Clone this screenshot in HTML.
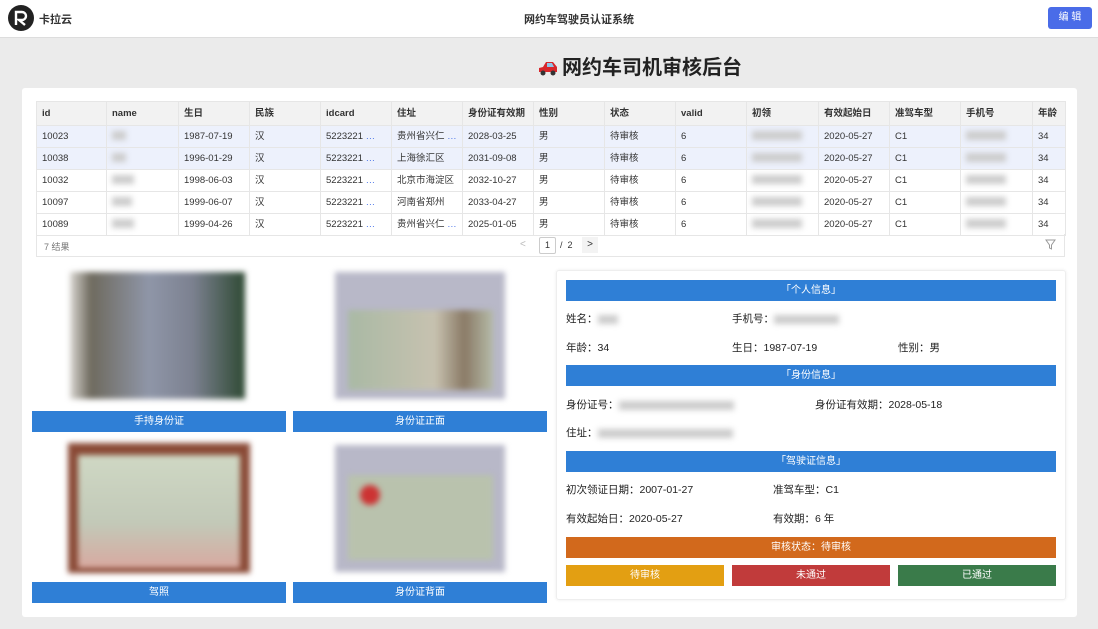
<!DOCTYPE html><html><head><meta charset="utf-8"><style>
*{box-sizing:border-box;margin:0;padding:0}
body{width:1098px;height:629px;background:#ebebeb;font-family:"Liberation Sans","Noto Sans CJK SC",sans-serif;color:#333;position:relative;overflow:hidden;font-size:10px}
.hdr{position:absolute;left:0;top:0;width:1098px;height:38px;background:#fff;border-bottom:1px solid #ddd}
.abs{position:absolute}
.card{position:absolute;left:22px;top:88px;width:1055px;height:529px;background:#fff;border-radius:3px}
table{border-collapse:collapse;position:absolute;left:36px;top:101px;width:1029px;table-layout:fixed}
td,th{height:22px;line-height:12px;border:1px solid #e6e6e6;text-align:left;vertical-align:middle;padding:0 0 0 5px;font-size:9.5px;font-weight:normal;white-space:nowrap;overflow:hidden;color:#333}
th{background:#f2f2f2;font-weight:bold;height:24px}
tr.sel td{background:#edf1fc}
.bl{display:inline-block;width:30px;height:9px;background:#ccc;filter:blur(3px);vertical-align:middle}
.dots{color:#4a74e8}
.btn{position:absolute;background:#2f7fd6;color:#fff;font-size:10px;text-align:center;line-height:21px;height:21px}
.img{position:absolute;filter:blur(3px)}
.lbl{position:absolute;font-size:10.5px;color:#222;line-height:14px}
</style></head><body>
<div class="hdr">
<svg class="abs" style="left:8px;top:5px" width="26" height="26" viewBox="0 0 26 26"><circle cx="13" cy="13" r="13" fill="#222"/><path d="M8 20V7h6a4 4 0 0 1 0 8h-3l6 5" stroke="#fff" stroke-width="2.4" fill="none"/></svg>
<div class="abs" style="left:39px;top:11px;font-size:11px;font-weight:bold">卡拉云</div>
<div class="abs" style="left:524px;top:11px;font-size:11px;font-weight:bold">网约车驾驶员认证系统</div>
<div class="abs" style="left:1048px;top:7px;width:44px;height:22px;background:#4a6ce8;border-radius:3px;color:#fff;font-size:10px;text-align:center;line-height:22px">编 辑</div>
</div>
<svg class="abs" style="left:537px;top:60px" width="22" height="16" viewBox="0 0 22 16"><path d="M2 12V8l4-1 3-5h7l4 5v5z" fill="#d8262b"/><path d="M10 3h5l2 4h-7z" fill="#8fc4e6"/><circle cx="6" cy="13" r="2.5" fill="#333"/><circle cx="16" cy="13" r="2.5" fill="#333"/></svg>
<div class="abs" style="left:562px;top:56px;font-size:20px;line-height:24px;font-weight:bold;color:#222">网约车司机审核后台</div>
<div class="card"></div>
<table>
<colgroup><col style="width:70px"><col style="width:72px"><col style="width:71px"><col style="width:71px"><col style="width:71px"><col style="width:71px"><col style="width:71px"><col style="width:71px"><col style="width:71px"><col style="width:71px"><col style="width:72px"><col style="width:71px"><col style="width:71px"><col style="width:72px"><col style="width:33px"></colgroup>
<tr><th>id</th><th>name</th><th>生日</th><th>民族</th><th>idcard</th><th>住址</th><th>身份证有效期</th><th>性别</th><th>状态</th><th>valid</th><th>初领</th><th>有效起始日</th><th>准驾车型</th><th>手机号</th><th>年龄</th></tr>
<tr class="sel"><td>10023</td><td><span class="bl" style="width:14px"></span></td><td>1987-07-19</td><td>汉</td><td>5223221<span class="dots"> …</span></td><td>贵州省兴仁 <span class="dots">…</span></td><td>2028-03-25</td><td>男</td><td>待审核</td><td>6</td><td><span class="bl" style="width:50px"></span></td><td>2020-05-27</td><td>C1</td><td><span class="bl" style="width:40px"></span></td><td>34</td></tr>
<tr class="sel"><td>10038</td><td><span class="bl" style="width:14px"></span></td><td>1996-01-29</td><td>汉</td><td>5223221<span class="dots"> …</span></td><td>上海徐汇区</td><td>2031-09-08</td><td>男</td><td>待审核</td><td>6</td><td><span class="bl" style="width:50px"></span></td><td>2020-05-27</td><td>C1</td><td><span class="bl" style="width:40px"></span></td><td>34</td></tr>
<tr><td>10032</td><td><span class="bl" style="width:22px"></span></td><td>1998-06-03</td><td>汉</td><td>5223221<span class="dots"> …</span></td><td>北京市海淀区</td><td>2032-10-27</td><td>男</td><td>待审核</td><td>6</td><td><span class="bl" style="width:50px"></span></td><td>2020-05-27</td><td>C1</td><td><span class="bl" style="width:40px"></span></td><td>34</td></tr>
<tr><td>10097</td><td><span class="bl" style="width:20px"></span></td><td>1999-06-07</td><td>汉</td><td>5223221<span class="dots"> …</span></td><td>河南省郑州</td><td>2033-04-27</td><td>男</td><td>待审核</td><td>6</td><td><span class="bl" style="width:50px"></span></td><td>2020-05-27</td><td>C1</td><td><span class="bl" style="width:40px"></span></td><td>34</td></tr>
<tr><td>10089</td><td><span class="bl" style="width:22px"></span></td><td>1999-04-26</td><td>汉</td><td>5223221<span class="dots"> …</span></td><td>贵州省兴仁 <span class="dots">…</span></td><td>2025-01-05</td><td>男</td><td>待审核</td><td>6</td><td><span class="bl" style="width:50px"></span></td><td>2020-05-27</td><td>C1</td><td><span class="bl" style="width:40px"></span></td><td>34</td></tr>
</table>
<div class="abs" style="left:36px;top:234px;width:1029px;height:23px;border:1px solid #e6e6e6;border-top:none"></div>
<div class="abs" style="left:44px;top:240px;font-size:9px;color:#777">7 结果</div>
<div class="abs" style="left:520px;top:239px;font-size:10px;color:#bbb">&lt;</div>
<div class="abs" style="left:539px;top:237px;width:17px;height:17px;border:1px solid #ccc;border-radius:2px;font-size:9px;text-align:center;line-height:15px">1</div>
<div class="abs" style="left:560px;top:240px;font-size:9px">/ &nbsp;2</div>
<div class="abs" style="left:582px;top:237px;width:16px;height:16px;background:#f3f3f3;font-size:10px;text-align:center;line-height:16px">&gt;</div>
<svg class="abs" style="left:1045px;top:239px" width="11" height="11" viewBox="0 0 11 11"><path d="M1 1h9L6.5 6v4L4.5 9V6z" fill="none" stroke="#999"/></svg>
<div class="img" style="left:70px;top:272px;width:175px;height:127px;background:linear-gradient(90deg,#d8d5d0 0%,#6e6a5e 12%,#8f96a8 45%,#7c8190 70%,#2f4a34 100%)"></div>
<div class="img" style="left:335px;top:272px;width:170px;height:127px;background:#b8b8c8"></div>
<div class="img" style="left:348px;top:310px;width:145px;height:80px;background:linear-gradient(90deg,#a9b9a4,#c7c2b0 60%,#8a7a66 80%,#b5bba8)"></div>
<div class="btn" style="left:32px;top:411px;width:254px">手持身份证</div>
<div class="btn" style="left:293px;top:411px;width:254px">身份证正面</div>
<div class="img" style="left:68px;top:443px;width:182px;height:130px;background:#8a4a36"></div>
<div class="img" style="left:78px;top:455px;width:162px;height:113px;background:linear-gradient(180deg,#cfd8c4,#c2c9b8 60%,#d8a9a0)"></div>
<div class="img" style="left:335px;top:445px;width:170px;height:127px;background:#b8b8c8"></div>
<div class="img" style="left:348px;top:475px;width:145px;height:85px;background:#b9c2ad"></div>
<div class="img" style="left:360px;top:485px;width:20px;height:20px;border-radius:50%;background:#c33"></div>
<div class="btn" style="left:32px;top:582px;width:254px">驾照</div>
<div class="btn" style="left:293px;top:582px;width:254px">身份证背面</div>
<div class="abs" style="left:556px;top:270px;width:510px;height:330px;background:#fff;border:1px solid #eee;border-radius:3px;box-shadow:0 0 3px rgba(0,0,0,.08)"></div>
<div class="btn" style="left:566px;top:280px;width:490px">「个人信息」</div>
<div class="lbl" style="left:566px;top:312px">姓名：<span class="bl" style="width:20px"></span></div>
<div class="lbl" style="left:732px;top:312px">手机号：<span class="bl" style="width:65px"></span></div>
<div class="lbl" style="left:566px;top:341px">年龄：34</div>
<div class="lbl" style="left:732px;top:341px">生日：1987-07-19</div>
<div class="lbl" style="left:898px;top:341px">性别：男</div>
<div class="btn" style="left:566px;top:365px;width:490px">「身份信息」</div>
<div class="lbl" style="left:566px;top:398px">身份证号：<span class="bl" style="width:115px"></span></div>
<div class="lbl" style="left:815px;top:398px">身份证有效期：2028-05-18</div>
<div class="lbl" style="left:566px;top:426px">住址：<span class="bl" style="width:135px"></span></div>
<div class="btn" style="left:566px;top:451px;width:490px">「驾驶证信息」</div>
<div class="lbl" style="left:566px;top:483px">初次领证日期：2007-01-27</div>
<div class="lbl" style="left:773px;top:483px">准驾车型：C1</div>
<div class="lbl" style="left:566px;top:512px">有效起始日：2020-05-27</div>
<div class="lbl" style="left:773px;top:512px">有效期：6 年</div>
<div class="btn" style="left:566px;top:537px;width:490px;background:#d2691c">审核状态：待审核</div>
<div class="btn" style="left:566px;top:565px;width:158px;background:#e39f12">待审核</div>
<div class="btn" style="left:732px;top:565px;width:158px;background:#c13b3b">未通过</div>
<div class="btn" style="left:898px;top:565px;width:158px;background:#3a7b4a">已通过</div>
</body></html>
